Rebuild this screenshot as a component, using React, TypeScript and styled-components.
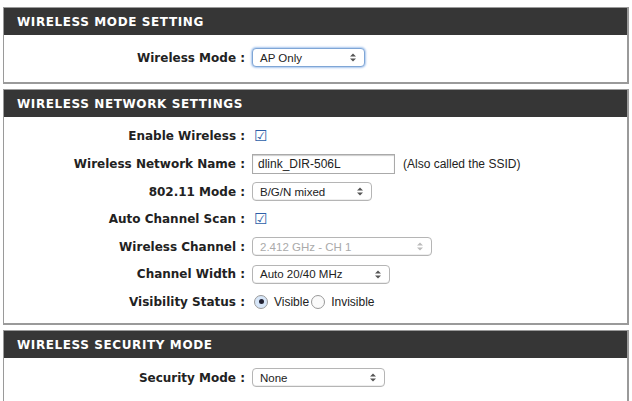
import React from 'react'
import styled, { createGlobalStyle } from 'styled-components'

const Global = createGlobalStyle`
  body { margin: 0; background: #fff; font-family: "Liberation Sans", Arial, sans-serif; }
`

const Page = styled.div`
  padding: 7px 3px 0 3px;
  display: flex;
  flex-direction: column;
  gap: 5px;
  height: 401px;
  overflow: hidden;
  box-sizing: border-box;
`

const Box = styled.div`
  border: 1px solid #9a9a9a;
  border-bottom-width: 2px;
  border-right-width: 2px;
  background: #fff;
`

const Header = styled.div`
  background: #363636;
  color: #fff;
  height: 27px;
  line-height: 28px;
  padding-left: 13px;
  font-family: "DejaVu Sans", sans-serif;
  font-weight: bold;
  font-size: 12px;
  letter-spacing: 0.6px;
`

const Body = styled.div<{ pt: number; pb: number }>`
  padding: ${p => p.pt}px 0 ${p => p.pb}px 0;
`

const Row = styled.div`
  display: flex;
  align-items: center;
  height: 27.6px;
  font-size: 12px;
  color: #222;
`

const Label = styled.div`
  width: 248px;
  text-align: right;
  font-family: "DejaVu Sans", sans-serif;
  font-weight: bold;
  font-size: 12px;
  padding-right: 7px;
  box-sizing: border-box;
`

const Select = styled.div<{ w: number; disabled?: boolean; focus?: boolean }>`
  width: ${p => p.w}px;
  height: 19px;
  box-sizing: border-box;
  border: 1px solid ${p => (p.focus ? '#7fa6d6' : '#b5b5b5')};
  box-shadow: ${p => (p.focus ? '0 0 2px 1px #a9c7ee' : 'inset 0 -1px 0 #eee')};
  border-radius: 4px;
  display: flex;
  align-items: center;
  justify-content: space-between;
  padding: 0 8px 0 7px;
  font-size: 11.5px;
  color: ${p => (p.disabled ? '#aaa' : '#222')};
  background: #fff;
`

const Input = styled.div`
  width: 143px;
  height: 20px;
  box-sizing: border-box;
  border: 1px solid #aaa;
  box-shadow: inset 0 1px 1px #ccc;
  padding: 0 5px;
  display: flex;
  align-items: center;
  font-size: 12px;
`

const Note = styled.span`
  margin-left: 8px;
  font-size: 12px;
`

const Check = styled.span`
  font-size: 15px;
  color: #2d5fa8;
  margin-left: 2px;
`

const Radio = styled.span<{ on?: boolean }>`
  width: 14px;
  height: 14px;
  border-radius: 50%;
  border: 1px solid #999;
  box-sizing: border-box;
  display: inline-flex;
  align-items: center;
  justify-content: center;
  margin: 0 6px 0 2px;
  background: ${p => (p.on ? '#d7e6f8' : '#fafafa')};
  &::after {
    content: '';
    width: 5px;
    height: 5px;
    border-radius: 50%;
    background: ${p => (p.on ? '#223' : 'transparent')};
  }
`

const Arrows = ({ c }: { c: string }) => (
  <svg width="6" height="9" viewBox="0 0 6 9">
    <path d="M0 3.5 L3 0.5 L6 3.5 Z M0 5.5 L3 8.5 L6 5.5 Z" fill={c} />
  </svg>
)

const Sel = ({ w, text, disabled, focus }: { w: number; text: string; disabled?: boolean; focus?: boolean }) => (
  <Select w={w} disabled={disabled} focus={focus}>
    <span>{text}</span>
    <Arrows c={disabled ? '#bbb' : '#555'} />
  </Select>
)

export default function App() {
  return (
    <>
      <Global />
      <Page>
        <Box>
          <Header>WIRELESS MODE SETTING</Header>
          <Body pt={9} pb={10}>
            <Row>
              <Label>Wireless Mode :</Label>
              <Sel w={113} text="AP Only" focus />
            </Row>
          </Body>
        </Box>
        <Box>
          <Header>WIRELESS NETWORK SETTINGS</Header>
          <Body pt={6} pb={7}>
            <Row>
              <Label>Enable Wireless :</Label>
              <Check>☑</Check>
            </Row>
            <Row>
              <Label>Wireless Network Name :</Label>
              <Input>dlink_DIR-506L</Input>
              <Note>(Also called the SSID)</Note>
            </Row>
            <Row>
              <Label>802.11 Mode :</Label>
              <Sel w={120} text="B/G/N mixed" />
            </Row>
            <Row>
              <Label>Auto Channel Scan :</Label>
              <Check>☑</Check>
            </Row>
            <Row>
              <Label>Wireless Channel :</Label>
              <Sel w={180} text="2.412 GHz - CH 1" disabled />
            </Row>
            <Row>
              <Label>Channel Width :</Label>
              <Sel w={138} text="Auto 20/40 MHz" />
            </Row>
            <Row>
              <Label>Visibility Status :</Label>
              <Radio on />
              <span>Visible</span>
              <Radio />
              <span>Invisible</span>
            </Row>
          </Body>
        </Box>
        <Box>
          <Header>WIRELESS SECURITY MODE</Header>
          <Body pt={6} pb={20}>
            <Row>
              <Label>Security Mode :</Label>
              <Sel w={133} text="None" />
            </Row>
          </Body>
        </Box>
      </Page>
    </>
  )
}
